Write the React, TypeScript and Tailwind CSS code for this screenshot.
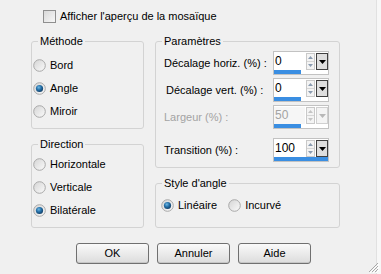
import type { ReactNode } from 'react';

function Radio({ checked = false }: { checked?: boolean }) {
  return (
    <svg width="13" height="13" viewBox="0 0 13 13" className="shrink-0">
      <defs>
        <linearGradient id="radioFill" x1="0" y1="0" x2="1" y2="1">
          <stop offset="0" stopColor="#d4d4d4" />
          <stop offset="1" stopColor="#fbfbfb" />
        </linearGradient>
        <radialGradient id="radioDot" cx="0.4" cy="0.35" r="0.7">
          <stop offset="0" stopColor="#6fb8e4" />
          <stop offset="0.5" stopColor="#236ea6" />
          <stop offset="1" stopColor="#123a60" />
        </radialGradient>
      </defs>
      <circle cx="6.5" cy="6.5" r="5.8" fill="url(#radioFill)" stroke="#a9a9a9" strokeWidth="1" />
      {checked && <circle cx="6.5" cy="6.5" r="3.6" fill="url(#radioDot)" />}
    </svg>
  );
}

function RadioRow({ label, checked }: { label: string; checked?: boolean }) {
  return (
    <div className="h-[23px] flex items-center gap-[4px]">
      <Radio checked={checked} />
      <span>{label}</span>
    </div>
  );
}

function GroupBox({ title, className, children }: { title: string; className: string; children: ReactNode }) {
  return (
    <div className={`relative border border-[#d3d3d3] rounded-[3px] ${className}`}>
      <span className="absolute -top-[7px] left-[6px] px-[2px] bg-[#f0f0f0] leading-[13px]">{title}</span>
      {children}
    </div>
  );
}

function SpinField({ value, fill, disabled = false }: { value: string; fill: number; disabled?: boolean }) {
  const arrow = disabled ? '#c4c4c4' : '#8a9bb0';
  return (
    <div className="w-[56px] h-[24px] border border-[#c2c2c2] bg-white flex flex-col">
      <div className="flex h-[18px] pt-[1px]">
        <div className={`w-[31px] pl-[1px] text-[12px] leading-[16px] ${disabled ? 'text-[#a3a3a3] bg-[#f6f6f6]' : 'text-black'}`}>
          {value}
        </div>
        <div className="w-[9px] ml-[1px] flex flex-col border border-[#c9c9c9] bg-[#f4f4f4]">
          <div className="flex-1 flex items-center justify-center border-b border-[#d6d6d6]">
            <svg width="5" height="3" viewBox="0 0 5 3">
              <path d="M0 3 L2.5 0 L5 3 Z" fill={arrow} />
            </svg>
          </div>
          <div className="flex-1 flex items-center justify-center">
            <svg width="5" height="3" viewBox="0 0 5 3">
              <path d="M0 0 L5 0 L2.5 3 Z" fill={arrow} />
            </svg>
          </div>
        </div>
        <div
          className={`w-[12px] ml-[1px] flex items-center justify-center ${
            disabled ? 'bg-[#f4f4f4] border border-[#d0d0d0]' : 'bg-[#dedede] border border-[#404040]'
          }`}
        >
          <svg width="7" height="4" viewBox="0 0 7 4">
            <path d="M0 0 L7 0 L3.5 4 Z" fill={disabled ? '#b8b8b8' : '#000'} />
          </svg>
        </div>
      </div>
      <div className="mt-auto h-[4px]">
        <div className="h-full bg-[#3a8ee2]" style={{ width: `${fill}%` }} />
      </div>
    </div>
  );
}

function ParamRow({ label, value, fill, disabled, indent }: { label: string; value: string; fill: number; disabled?: boolean; indent?: boolean }) {
  return (
    <div className="flex items-center">
      <span className={`w-[109px] ${indent ? 'pl-[2px]' : ''} ${disabled ? 'text-[#a3a3a3]' : ''}`}>{label}</span>
      <SpinField value={value} fill={fill} disabled={disabled} />
    </div>
  );
}

function Button({ label }: { label: string }) {
  return (
    <button className="w-[73px] h-[21px] rounded-[3px] border border-[#707070] bg-linear-to-b from-[#fafafa] to-[#dcdcdc] shadow-[inset_0_-1px_0_#c6c6c6] leading-[19px] text-center">
      {label}
    </button>
  );
}

export default function App() {
  return (
    <div className="relative w-[381px] h-[274px] bg-[#f0f0f0] overflow-hidden font-['Liberation_Sans',Arial,sans-serif] text-[11px] text-black">
      {/* Preview checkbox */}
      <div className="flex items-center gap-[3px] ml-[43px] mt-[10px] h-[13px]">
        <div className="w-[13px] h-[13px] border border-[#8f8f8f] bg-linear-to-br from-[#d9d9d9] to-[#f7f7f7]" />
        <span className="ml-[1px]">Afficher l'aperçu de la mosaïque</span>
      </div>

      <div className="flex gap-[11px] ml-[31px] mt-[18px]">
        {/* Left column */}
        <div className="w-[113px] flex flex-col">
          <GroupBox title="Méthode" className="h-[88px] pt-[12px] pl-[1px]">
            <RadioRow label="Bord" />
            <RadioRow label="Angle" checked />
            <RadioRow label="Miroir" />
          </GroupBox>
          <GroupBox title="Direction" className="h-[84px] mt-[15px] pt-[8px] pl-[1px]">
            <RadioRow label="Horizontale" />
            <RadioRow label="Verticale" />
            <RadioRow label="Bilatérale" checked />
          </GroupBox>
        </div>

        {/* Right column */}
        <div className="w-[185px] flex flex-col">
          <GroupBox title="Paramètres" className="h-[127px] pt-[9px] pl-[8px] flex flex-col">
            <ParamRow label="Décalage horiz. (%) :" value="0" fill={50} />
            <div className="mt-[3px]">
              <ParamRow label="Décalage vert. (%) :" value="0" fill={50} indent />
            </div>
            <div className="mt-[3px]">
              <ParamRow label="Largeur (%) :" value="50" fill={50} disabled />
            </div>
            <div className="mt-[9px]">
              <ParamRow label="Transition (%) :" value="100" fill={100} />
            </div>
          </GroupBox>
          <GroupBox title="Style d'angle" className="h-[45px] mt-[15px] pt-[10px] pl-[5px]">
            <div className="flex gap-[11px]">
              <RadioRow label="Linéaire" checked />
              <RadioRow label="Incurvé" />
            </div>
          </GroupBox>
        </div>
      </div>

      {/* Buttons */}
      <div className="flex gap-[8px] ml-[76px] mt-[15px]">
        <Button label="OK" />
        <Button label="Annuler" />
        <Button label="Aide" />
      </div>

      {/* Window right edge */}
      <div className="absolute top-0 right-0 w-[5px] h-full bg-[#f7f7f7] border-l border-[#e1e1e1]" />

      {/* Size grip */}
      <svg className="absolute right-[2px] bottom-[1px]" width="12" height="12" viewBox="0 0 12 12">
        <path d="M11 2 L2 11 M11 5 L5 11 M11 8 L8 11" stroke="#a8a8a8" strokeWidth="1" />
        <path d="M12 3 L3 12 M12 6 L6 12 M12 9 L9 12" stroke="#ffffff" strokeWidth="1" />
      </svg>
    </div>
  );
}
